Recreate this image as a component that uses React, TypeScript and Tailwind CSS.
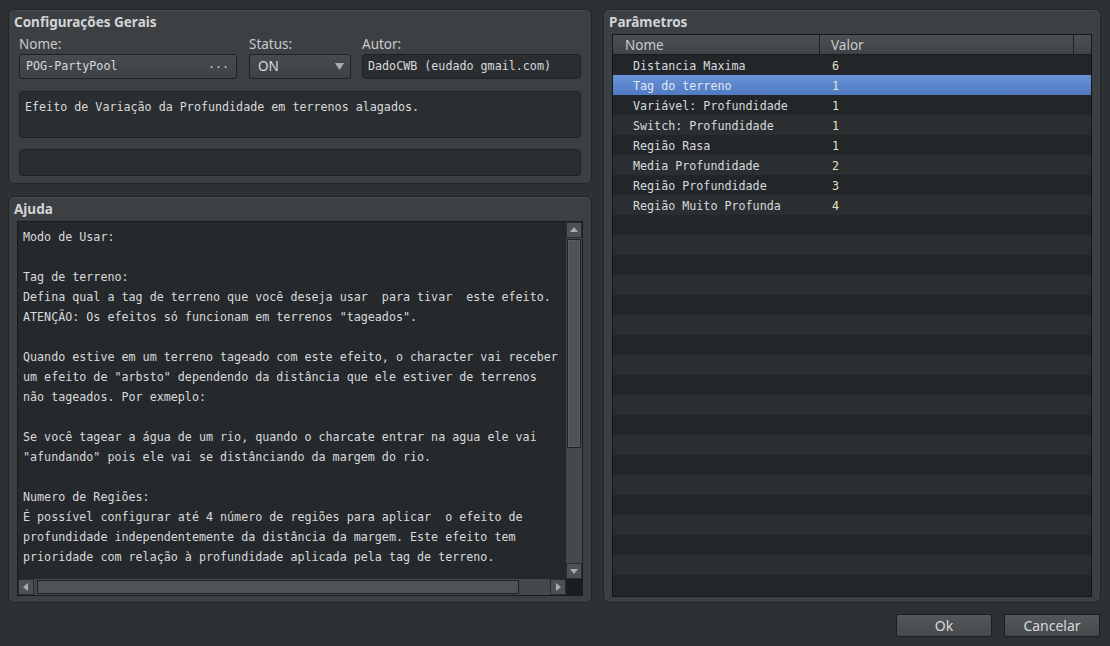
const mono = "font-['DejaVu_Sans_Mono',monospace] text-[11.7px]";
const sans = "font-['Noto_Sans',sans-serif]";

const params: [string, string][] = [
  ["Distancia Maxima", "6"],
  ["Tag do terreno", "1"],
  ["Variável: Profundidade", "1"],
  ["Switch: Profundidade", "1"],
  ["Região Rasa", "1"],
  ["Media Profundidade", "2"],
  ["Região Profundidade", "3"],
  ["Região Muito Profunda", "4"],
];

const helpText = [
  "Modo de Usar:",
  "",
  "Tag de terreno:",
  "Defina qual a tag de terreno que você deseja usar  para tivar  este efeito.",
  'ATENÇÃO: Os efeitos só funcionam em terrenos "tageados".',
  "",
  "Quando estive em um terreno tageado com este efeito, o character vai receber",
  'um efeito de "arbsto" dependendo da distância que ele estiver de terrenos',
  "não tageados. Por exmeplo:",
  "",
  "Se você tagear a água de um rio, quando o charcate entrar na agua ele vai",
  '"afundando" pois ele vai se distânciando da margem do rio.',
  "",
  "Numero de Regiões:",
  "É possível configurar até 4 número de regiões para aplicar  o efeito de",
  "profundidade independentemente da distância da margem. Este efeito tem",
  "prioridade com relação à profundidade aplicada pela tag de terreno.",
];

function Arrow({ dir }: { dir: "up" | "down" | "left" | "right" }) {
  const pts = {
    up: "1,7 5,2 9,7",
    down: "1,3 5,8 9,3",
    left: "7,1 2,5 7,9",
    right: "3,1 8,5 3,9",
  }[dir];
  return (
    <svg width="10" height="10" viewBox="0 0 10 10">
      <polygon points={pts} fill="#a9adb0" />
    </svg>
  );
}

function Panel({ title, className, children }: { title: string; className?: string; children: React.ReactNode }) {
  return (
    <div className={`flex flex-col rounded-[6px] border border-[#222527] bg-[#3c4043] shadow-[inset_0_1px_0_#474b4e] ${className ?? ""}`}>
      <div className={`mt-[2px] h-[20px] pl-[5px] text-[13.5px] font-bold leading-[20px] text-[#d2d4d6] ${sans}`}>{title}</div>
      {children}
    </div>
  );
}

export default function App() {
  const rows = Array.from({ length: 27 }, (_, i) => params[i]);
  return (
    <div className="flex h-[646px] w-[1110px] flex-col bg-[#2e3134] pl-[8px] pr-[9px] pt-[9px]">
      <div className="flex h-[594px] gap-[11px]">
        <div className="flex w-[584px] flex-col gap-[12px]">
          <Panel title="Configurações Gerais" className="h-[175px]">
            <div className="px-[10px]">
              <div className={`mt-[2px] flex h-[20px] text-[13.5px] leading-[20px] text-[#c9cbcd] ${sans}`}>
                <span className="w-[230px]">Nome:</span>
                <span className="w-[113px]">Status:</span>
                <span>Autor:</span>
              </div>
              <div className="flex h-[25px] gap-[12px]">
                <div className={`flex w-[218px] items-center justify-between rounded-[3px] border border-[#1f2224] bg-gradient-to-b from-[#474b4e] to-[#3e4245] pl-[6px] pr-[7px] text-[#d8dadc] ${mono}`}>
                  <span className="pt-[1px]">POG-PartyPool</span>
                  <span className="pb-[3px] text-[#c4c6c8]">...</span>
                </div>
                <div className={`flex w-[102px] items-center justify-between rounded-[3px] border border-[#1f2224] bg-gradient-to-b from-[#474b4e] to-[#3e4245] pl-[8px] pr-[6px] text-[13.5px] text-[#d8dadc] ${sans}`}>
                  <span>ON</span>
                  <svg width="9" height="7" viewBox="0 0 9 7">
                    <polygon points="0,0 9,0 4.5,7" fill="#a9adb0" />
                  </svg>
                </div>
                <div className={`ml-[-1px] flex flex-1 items-center rounded-[4px] border border-[#1f2224] bg-[#2b2e31] pl-[5px] pt-[1px] text-[#d8dadc] ${mono}`}>
                  DadoCWB (eudado gmail.com)
                </div>
              </div>
              <div className={`mt-[12px] h-[47px] rounded-[4px] border border-[#1f2224] bg-[#2b2e31] pl-[5px] pt-[5px] leading-[20px] text-[#d8dadc] ${mono}`}>
                Efeito de Variação da Profundidade em terrenos alagados.
              </div>
              <div className="mt-[11px] h-[27px] rounded-[4px] border border-[#1f2224] bg-[#2b2e31]" />
            </div>
          </Panel>

          <Panel title="Ajuda" className="flex-1">
            <div className="mt-[2px] flex flex-1 flex-col px-[8px] pb-[6px]">
              <div className="flex flex-1 flex-col border border-[#1a1c1e] bg-[#25292c]">
                <div className="flex flex-1">
                  <div className={`flex-1 whitespace-pre pl-[5px] pt-[5px] leading-[20px] text-[#d8dadc] ${mono}`}>
                    {helpText.map((l, i) => (
                      <div key={i} className="h-[20px]">{l}</div>
                    ))}
                  </div>
                  <div className="flex w-[16px] flex-col bg-[#45494c]">
                    <div className="flex h-[16px] items-center justify-center border border-[#2a2d30] bg-[#4d5154]">
                      <Arrow dir="up" />
                    </div>
                    <div className="mx-[1px] mt-[1px] h-[209px] border border-[#1f2224] bg-[#4f5356] shadow-[inset_0_0_0_1px_#5a5e61]" />
                    <div className="flex-1" />
                    <div className="flex h-[16px] items-center justify-center border border-[#2a2d30] bg-[#4d5154]">
                      <Arrow dir="down" />
                    </div>
                  </div>
                </div>
                <div className="flex h-[16px]">
                  <div className="flex flex-1 bg-[#45494c]">
                    <div className="flex w-[16px] items-center justify-center border border-[#2a2d30] bg-[#4d5154]">
                      <Arrow dir="left" />
                    </div>
                    <div className="my-[1px] ml-[3px] w-[482px] border border-[#1f2224] bg-[#4f5356]" />
                    <div className="flex-1" />
                    <div className="flex w-[16px] items-center justify-center border border-[#2a2d30] bg-[#4d5154]">
                      <Arrow dir="right" />
                    </div>
                  </div>
                  <div className="w-[16px] bg-[#1b1d1f]" />
                </div>
              </div>
            </div>
          </Panel>
        </div>

        <Panel title="Parâmetros" className="w-[498px]">
          <div className="mt-[2px] flex flex-1 flex-col px-[8px] pb-[5px]">
            <div className="flex flex-1 flex-col overflow-hidden border border-[#151719] bg-[#222629]">
              <div className={`flex h-[20px] shrink-0 border-b border-[#1a1c1e] bg-gradient-to-b from-[#4c5053] to-[#3f4346] text-[13.5px] leading-[20px] text-[#c9cbcd] ${sans}`}>
                <div className="w-[207px] border-r border-[#1f2224] pl-[12px]">Nome</div>
                <div className="w-[254px] border-r border-[#1f2224] pl-[11px]">Valor</div>
                <div className="flex-1" />
              </div>
              {rows.map((r, i) => {
                const sel = i === 1;
                const bg = sel
                  ? "bg-gradient-to-b from-[#6a93d8] to-[#4f79c2]"
                  : i % 2 === 0
                    ? "bg-[#222629]"
                    : "bg-[#2a2e31]";
                return (
                  <div key={i} className={`flex h-[20px] shrink-0 items-center pt-[2px] leading-[18px] ${bg} ${mono}`}>
                    <div className={`w-[207px] pl-[20px] ${sel ? "text-[#e3e8f2]" : "text-[#d8dadc]"}`}>{r?.[0] ?? ""}</div>
                    <div className={`pl-[12px] ${sel ? "text-[#e8e4cf]" : "text-[#e6dfbd]"}`}>{r?.[1] ?? ""}</div>
                  </div>
                );
              })}
            </div>
          </div>
        </Panel>
      </div>

      <div className={`mr-[1px] mt-[11px] flex justify-end gap-[12px] text-[14px] text-[#d8dadc] ${sans}`}>
        <button className="h-[23px] w-[96px] rounded-[2px] border border-[#1d1f21] bg-gradient-to-b from-[#54585b] to-[#45494c] leading-[20px]">Ok</button>
        <button className="h-[23px] w-[96px] rounded-[2px] border border-[#1d1f21] bg-gradient-to-b from-[#54585b] to-[#45494c] leading-[20px]">Cancelar</button>
      </div>
    </div>
  );
}
